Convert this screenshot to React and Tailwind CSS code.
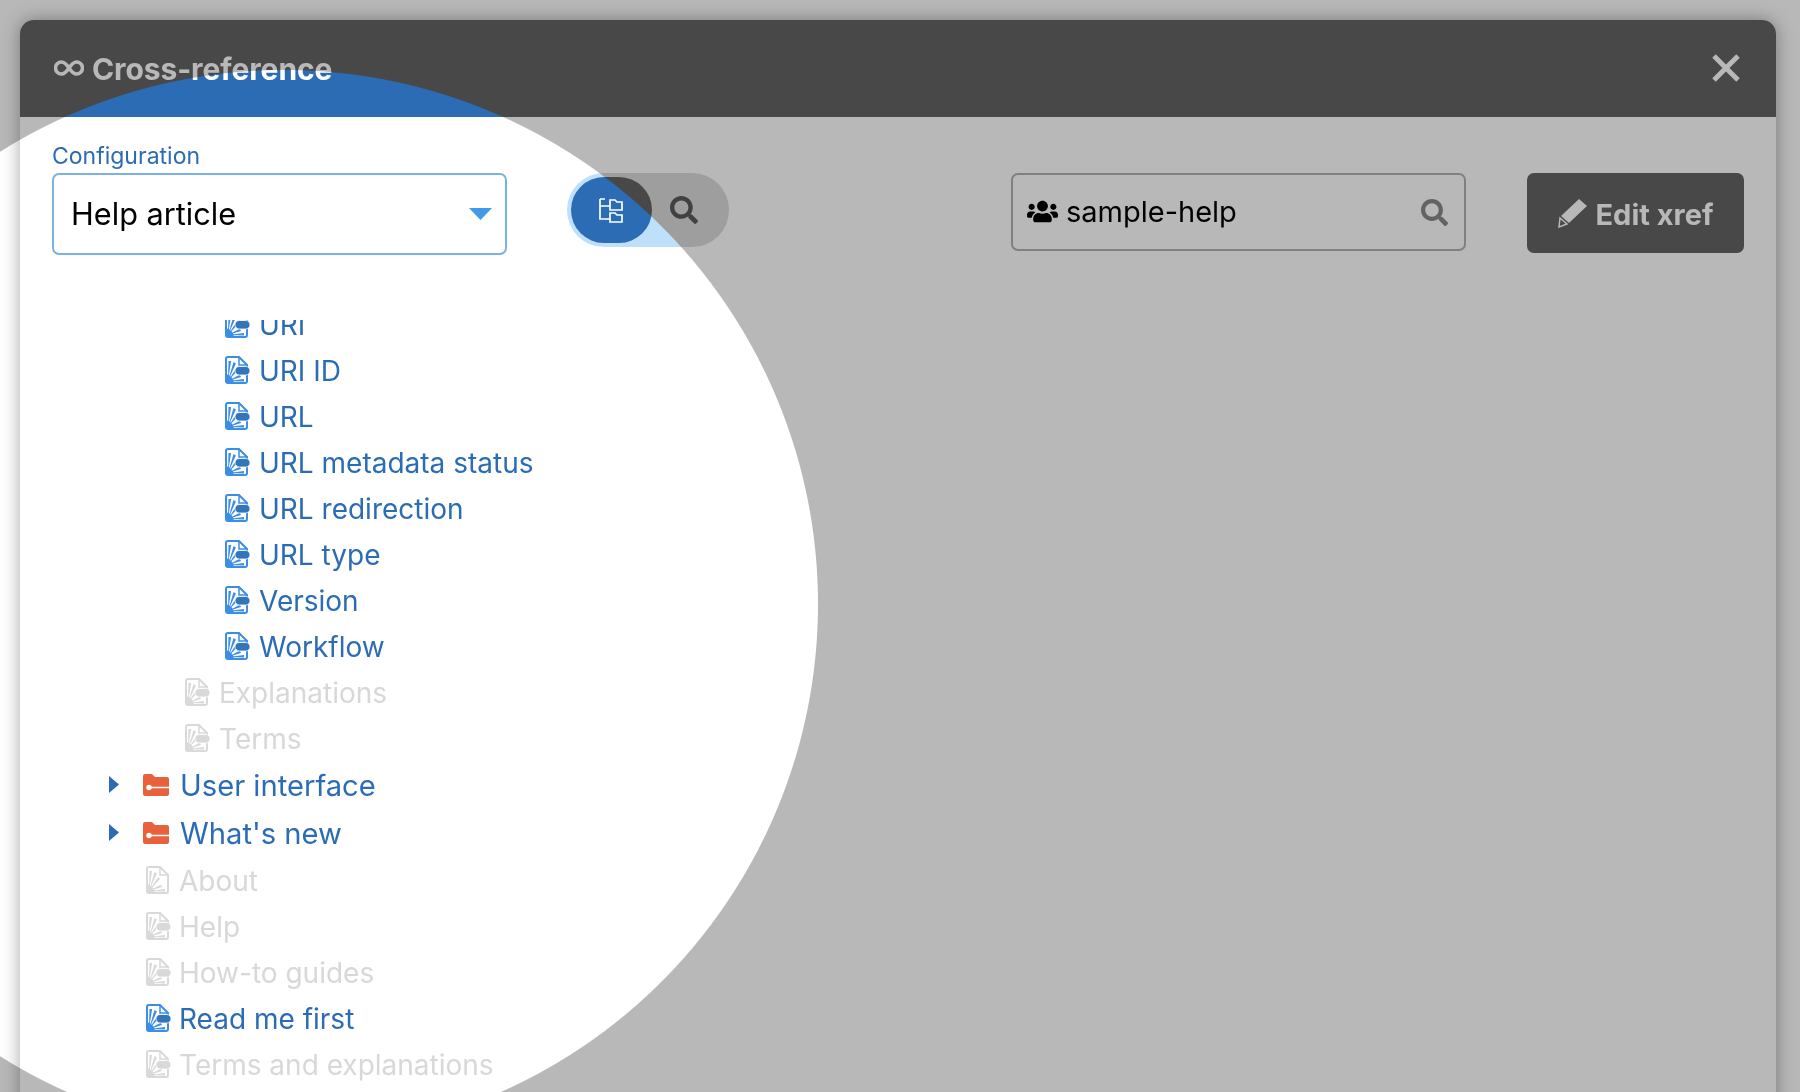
import React from "react";
import { FaUsers, FaSearch } from "react-icons/fa";

function DocIcon({ gray, pill = true }) {
  const c = gray ? "#d9d9d9" : "#3b8de6";
  const p = gray ? "#d9d9d9" : "#3275b8";
  return (
    <svg viewBox="0 0 25 28" className="w-[25px] h-[28px] shrink-0 -mt-[2px]">
      <path d="M3 1h11l8 8v16a2 2 0 0 1-2 2H3a2 2 0 0 1-2-2V3a2 2 0 0 1 2-2z" fill="none" stroke={c} strokeWidth="2" />
      <path d="M14 1v8h8" fill="none" stroke={c} strokeWidth="1.500" />
      <path d="M3 25L3.500 5l2.600 0zM3 25L8.500 6l2.400 1.500zM3 25l9-14 2 2zM3 25l12-6.500 1 2.500zM3 25l16-2v2.500zM1 18Q8 20 9 27H1z" fill={c} />
      {pill && <rect x="10" y="10.500" width="15" height="8.500" rx="4.250" fill={p} stroke="#ffffff" strokeWidth="0.800" />}
    </svg>
  );
}

function FileRow({ label, indent, gray, pill, gap = "ml-[9px]" }) {
  return (
    <div className={`h-[46px] flex items-center ${indent}`}>
      <DocIcon gray={gray} pill={pill} />
      <span className={`${gap} text-[28px] ${gray ? "text-[#d8d8d8]" : "text-[#2b6cb5]"}`}>{label}</span>
    </div>
  );
}

function FolderRow({ label }) {
  return (
    <div className="h-[48px] flex items-center pl-[89px]">
      <svg viewBox="0 0 10 17" className="w-[10px] h-[17px] shrink-0 -mt-[3px]"><path d="M0 0l10 8.500L0 17z" fill="#2b6cb5" /></svg>
      <svg viewBox="0 0 26 22" className="ml-[24px] w-[26px] h-[22px] shrink-0 -mt-[3px]">
        <path d="M2 0h7l3 3h12a2 2 0 0 1 2 2v15a2 2 0 0 1-2 2H2a2 2 0 0 1-2-2V2a2 2 0 0 1 2-2z" fill="#e9613a" />
        <path d="M6 13.500h20" stroke="#ffffff" strokeWidth="1.500" />
        <circle cx="6" cy="13.500" r="2.700" fill="#ffffff" />
      </svg>
      <span className="ml-[11px] text-[29.2px] text-[#2b6cb5]">{label}</span>
    </div>
  );
}

export default function App() {
  return (
    <div className="relative h-[1092px] overflow-hidden bg-white font-['Inter',sans-serif]">
      <div className="ml-5 mr-6 pt-5 h-[1112px]">
        <div className="h-full bg-white rounded-t-[14px] shadow-[0_0_18px_rgba(0,0,0,0.35)] flex flex-col">
          <header className="h-[97px] shrink-0 bg-[#2b6cb5] rounded-t-[14px] flex items-center pl-[34px] pr-[36px] text-white">
            <svg viewBox="0 0 30 16" className="w-[30px] h-[16px] -mt-[2px]" fill="none" stroke="currentColor" strokeWidth="3.600">
              <path d="M15 8C12 3.500 10 2 7.500 2a6 6 0 0 0 0 12c2.500 0 4.500-1.500 7.500-6s5-6 7.500-6a6 6 0 0 1 0 12c-2.500 0-4.500-1.500-7.500-6z" />
            </svg>
            <h1 className="ml-[8px] text-[30px] font-bold tracking-[-0.1px] mt-[2px]">Cross-reference</h1>
            <svg viewBox="0 0 28 28" className="ml-auto w-[28px] h-[28px] -mt-[2px]" fill="none" stroke="currentColor" strokeWidth="5">
              <path d="M2 2l24 24M26 2L2 26" />
            </svg>
          </header>

          <div className="flex items-start pl-[32px] pr-[32px] pt-[24px] shrink-0">
            <div className="w-[455px] shrink-0">
              <div className="h-[32px] text-[23px] leading-[30px] text-[#2b6cb5]">Configuration</div>
              <div className="h-[82px] border-2 border-[#7bb2e6] rounded-[7px] flex items-center justify-between pl-[17px] pr-[13px]">
                <span className="text-[30.7px] text-black mt-[1px]">Help article</span>
                <svg viewBox="0 0 23 12" className="w-[23px] h-[12px]"><path d="M0 0h23L11.500 12z" fill="#4299e9" /></svg>
              </div>
            </div>

            <div className="ml-[60px] mt-[32px] w-[162px] h-[74px] shrink-0 rounded-full bg-[#bfe0fb] flex items-center pl-[4px]">
              <div className="w-[81px] h-[66px] rounded-full bg-[#2b6cb5] flex items-center justify-center">
                <svg viewBox="0 0 24 25" className="w-[24px] h-[25px] -ml-[2px]" fill="none" stroke="#ffffff" strokeWidth="1.700">
                  <path d="M1 1h5M1 1v20h10M1 8h10" />
                  <path d="M11 2h5l2 2h5v8H11zM11 15h5l2 2h5v7H11z" />
                </svg>
              </div>
              <FaSearch className="ml-[18px] w-[28px] h-[28px] text-[#5a5a5a]" />
            </div>

            <div className="ml-[282px] mt-[32px] w-[455px] h-[78px] shrink-0 border-2 border-[#b2b2b2] rounded-[7px] flex items-center pl-[14px] pr-[16px]">
              <FaUsers className="w-[31px] h-[25px] text-black shrink-0 -mt-[2px]" />
              <span className="ml-[8px] text-[29px] text-black">sample-help</span>
              <FaSearch className="ml-auto w-[27px] h-[27px] text-[#8a8a8a]" />
            </div>

            <button className="ml-[61px] mt-[32px] w-[217px] h-[80px] shrink-0 rounded-[7px] bg-[#2b6cb5] text-white flex items-center justify-center gap-[8px]">
              <svg viewBox="0 0 30 30" className="w-[30px] h-[30px] shrink-0" fill="currentColor">
                <path d="M21 1l8 7L11 25l-8-7z" />
                <path d="M2 20l7 6-8 3z" fill="none" stroke="currentColor" strokeWidth="1.500" />
              </svg>
              <span className="text-[29px] font-bold mt-[3px]">Edit xref</span>
            </button>
          </div>

          <div className="mt-[65px] flex-1 min-h-0 overflow-hidden">
            <div className="-mt-[18px]">
              {["URI", "URI ID", "URL", "URL metadata status", "URL redirection", "URL type", "Version", "Workflow"].map((l) => (
                <FileRow key={l} label={l} indent="pl-[205px]" />
              ))}
              <FileRow label="Explanations" indent="pl-[165px]" gray />
              <FileRow label="Terms" indent="pl-[165px]" gray />
              <FolderRow label="User interface" />
              <FolderRow label="What's new" />
              <FileRow label="About" indent="pl-[126px]" gray pill={false} gap="ml-[8px]" />
              <FileRow label="Help" indent="pl-[126px]" gray gap="ml-[8px]" />
              <FileRow label="How-to guides" indent="pl-[126px]" gray gap="ml-[8px]" />
              <FileRow label="Read me first" indent="pl-[126px]" gap="ml-[8px]" />
              <FileRow label="Terms and explanations" indent="pl-[126px]" gray gap="ml-[8px]" />
            </div>
          </div>
        </div>
      </div>

      <div className="absolute inset-0 pointer-events-none backdrop-grayscale backdrop-brightness-[.72] [mask-image:radial-gradient(circle_534px_at_284px_604px,transparent_533.5px,black_534.5px)]" />
    </div>
  );
}
